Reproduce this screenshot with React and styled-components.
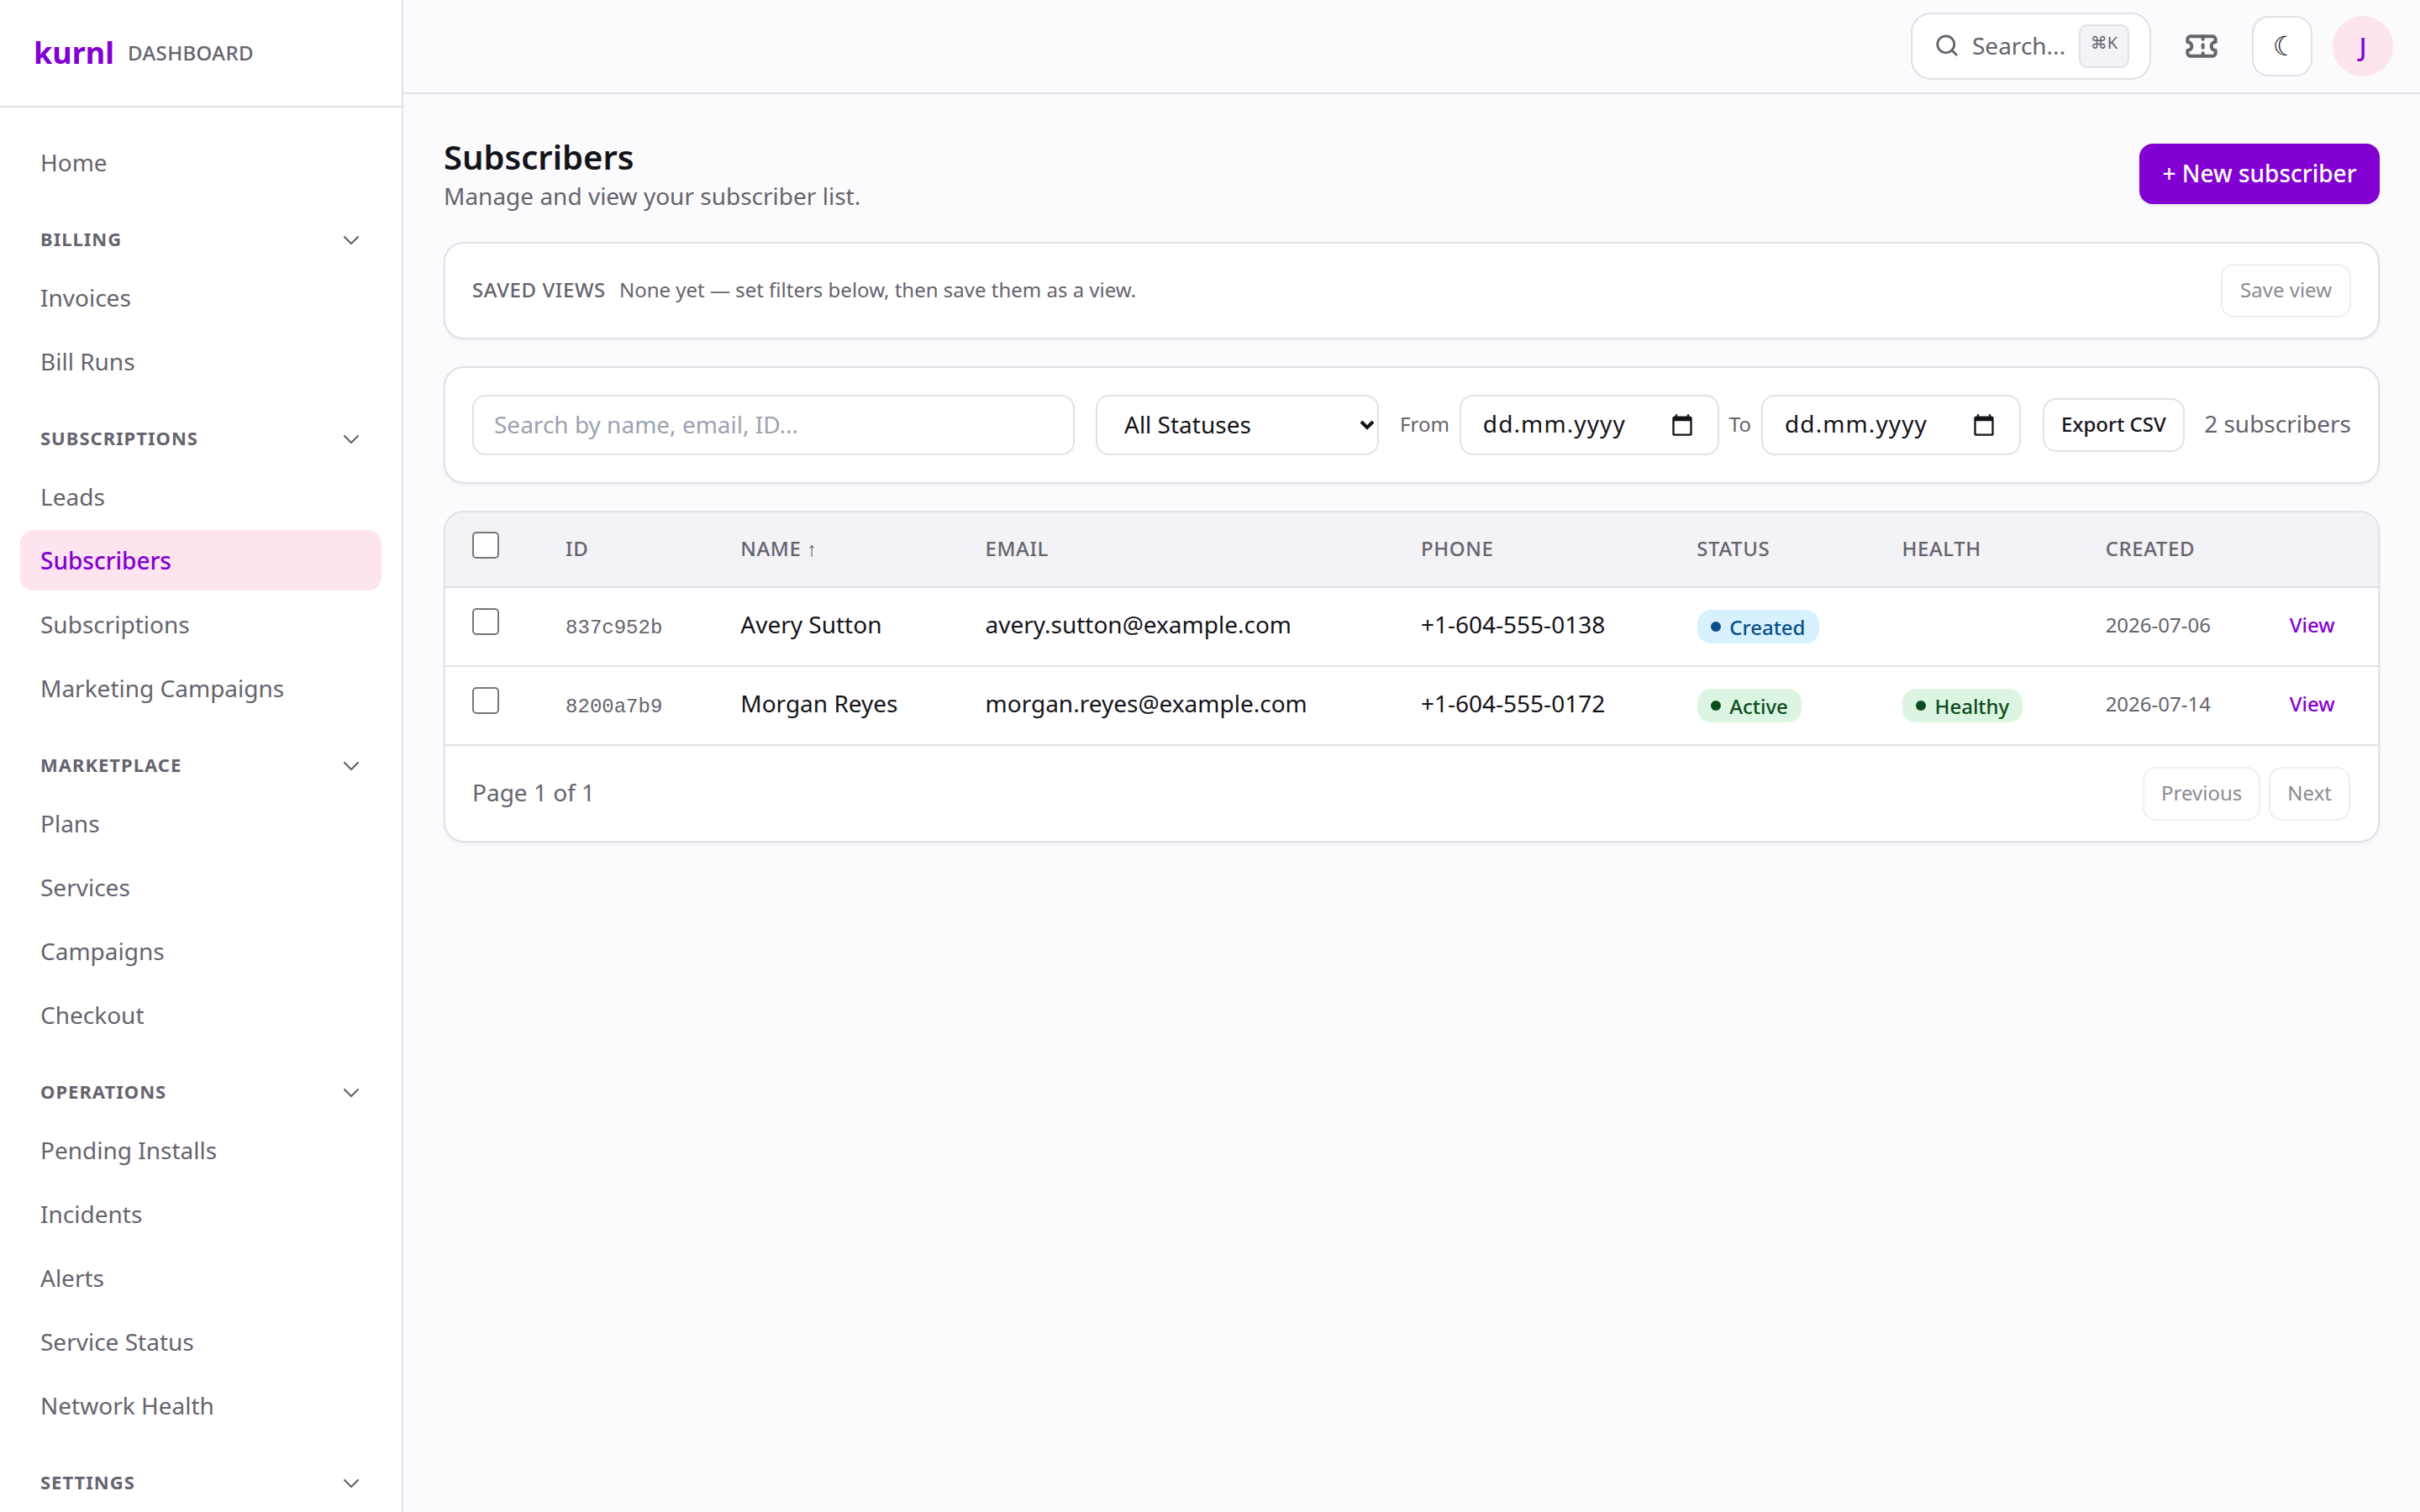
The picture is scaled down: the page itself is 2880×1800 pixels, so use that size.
import React from 'react';
import styled, { createGlobalStyle } from 'styled-components';
import { Search, Ticket, ChevronDown } from 'lucide-react';

const purple = '#8200d1';
const border = '#e2e0e8';
const muted = '#66636e';
const ink = '#15131a';

const Global = createGlobalStyle`
  * { box-sizing: border-box; }
  html, body { margin: 0; padding: 0; height: 100%; }
  body { font-family: "Noto Sans", sans-serif; background: #fbfafc; color: ${ink}; overflow: hidden; }
`;

const Shell = styled.div`display: flex; height: 1800px; overflow: hidden;`;
const Sidebar = styled.aside`width: 480px; flex: none; height: 100%; background: #fff; border-right: 2px solid ${border}; overflow: hidden;`;
const Brand = styled.div`height: 128px; border-bottom: 2px solid ${border}; display: flex; align-items: center; gap: 16px; padding: 0 0 2px 40px;`;
const Logo = styled.span`font-size: 36px; font-weight: 700; color: ${purple};`;
const BrandTag = styled.span`font-size: 24px; font-weight: 500; color: ${muted}; letter-spacing: 0.4px;`;
const Nav = styled.nav`padding: 29px 24px 0;`;
const NavItem = styled.a`
  display: flex; align-items: center; height: 72px; margin-bottom: 4px; padding: 0 24px; border-radius: 16px;
  font-size: 28px; color: ${p => (p.$active ? purple : muted)}; background: ${p => (p.$active ? '#fde4ee' : 'transparent')};
  font-weight: ${p => (p.$active ? 500 : 400)};
`;
const SectionHead = styled.div`
  display: flex; align-items: center; justify-content: space-between; height: 40px; margin: 35px 0 14px; padding: 0 20px 0 24px;
  font-size: 22px; font-weight: 700; letter-spacing: 1px; color: ${muted}; text-transform: uppercase;
  svg { margin-top: 3px; }
`;

const Column = styled.div`flex: 1; min-width: 0;`;
const Topbar = styled.header`height: 112px; border-bottom: 2px solid ${border}; display: flex; align-items: center; justify-content: flex-end; gap: 24px; padding: 0 32px 0 0;`;
const SearchBox = styled.div`width: 286px; height: 80px; background: #fff; border: 2px solid ${border}; border-radius: 24px; display: flex; align-items: center; gap: 15px; padding: 0 24px 2px 26px; color: ${muted}; font-size: 28px; margin-top: -1px;`;
const Kbd = styled.kbd`width: 60px; height: 52px; margin: 2px 0 0 auto; flex: none; border: 2px solid ${border}; border-radius: 10px; background: #f3f2f7; display: flex; justify-content: center; padding-top: 6px; font: 20px "Noto Sans", "DejaVu Sans", sans-serif; color: ${muted};`;
const IconButton = styled.button`width: 72px; height: 72px; border: ${p => (p.$framed ? `2px solid ${border}` : 'none')}; border-radius: 20px; background: ${p => (p.$framed ? '#fff' : 'transparent')}; padding: ${p => (p.$framed ? '0 0 0 6px' : '0')}; display: flex; align-items: center; justify-content: center; color: ${p => (p.$framed ? ink : muted)}; font: 32px "DejaVu Sans", sans-serif;`;
const Avatar = styled.div`width: 72px; height: 72px; border-radius: 50%; background: #fde4ee; color: ${purple}; display: flex; align-items: center; justify-content: center; font-size: 30px; font-weight: 500;`;

const Main = styled.main`padding: 48px 48px 0;`;
const PageHead = styled.div`display: flex; align-items: center; justify-content: space-between; margin-bottom: 34px;`;
const Title = styled.h1`margin: 0; font-size: 40px; line-height: 54px; font-weight: 600; color: ${ink};`;
const Subtitle = styled.p`margin: 0; font-size: 28px; line-height: 38px; padding-bottom: 2px; color: ${muted};`;
const Primary = styled.button`height: 72px; width: 286px; border: 0; border-radius: 16px; padding: 0 0 3px; background: ${purple}; color: #fff; font: 500 28px "Noto Sans", sans-serif; box-shadow: 0 2px 4px rgba(0,0,0,.06);`;

const Card = styled.section`background: #fff; border: 2px solid ${border}; border-radius: 24px; box-shadow: 0 2px 4px rgba(20,10,40,.05); margin-bottom: 32px;`;
const SavedRow = styled(Card)`height: 116px; display: flex; align-items: center; gap: 16px; padding: 0 32px;`;
const SavedLabel = styled.span`font-size: 24px; font-weight: 500; color: ${muted}; letter-spacing: 0.6px; padding-bottom: 3px;`;
const SavedNote = styled.span`font-size: 24px; color: ${muted}; padding-bottom: 3px;`;
const GhostButton = styled.button`
  height: 64px; padding: 0 21px 3px; background: #fff; border: 2px solid ${p => (p.$dim ? '#efeef3' : border)}; border-radius: 16px;
  font: ${p => p.$weight || 400} 24px "Noto Sans", sans-serif; color: ${p => (p.$dim ? '#8c8a92' : ink)};
`;
const SaveView = styled(GhostButton)`margin-left: auto;`;
const ExportButton = styled(GhostButton)`margin-left: 26px; padding: 0 20px 3px;`;
const PagerButton = styled(GhostButton)`padding: 0 20px 3px;`;

const Filters = styled(Card)`height: 140px; display: flex; align-items: center; padding: 0 32px;`;
const TextInput = styled.input`
  width: 717px; height: 72px; padding: 0 24px 3px; border: 2px solid ${border}; border-radius: 16px; background: #fff; font: 28px "Noto Sans", sans-serif; color: ${ink}; outline: 0;
  &::placeholder { color: #9ca3af; opacity: 1; }
`;
const Select = styled.select`
  appearance: none; width: 337px; height: 72px; margin-left: 25px; padding: 0 32px 3px; border: 2px solid ${border}; border-radius: 16px; font: 28px "Noto Sans", sans-serif; color: ${ink};
  background: #fff url("data:image/svg+xml;utf8,<svg xmlns='http://www.w3.org/2000/svg' width='20' height='14' viewBox='0 0 20 14'><path d='M3 3l7 7 7-7' fill='none' stroke='%2315131a' stroke-width='4'/></svg>") no-repeat right 2px center;
`;
const FieldLabel = styled.span`font-size: 24px; color: ${muted}; margin: 0 12px 0 ${p => p.$left}px; padding-bottom: 3px;`;
const DateField = styled.div`width: 309px; height: 72px; border: 2px solid ${border}; border-radius: 16px; display: flex; align-items: center; justify-content: space-between; padding: 0 28px 4px 26px; font-size: 28px; letter-spacing: 1.1px; color: ${ink}; svg { margin-top: 4px; }`;
const Count = styled.span`font-size: 28px; color: ${muted}; margin-left: auto; white-space: nowrap; padding-bottom: 5px;`;

const TableCard = styled(Card)`overflow: hidden; margin: 0;`;
const Table = styled.table`width: 100%; table-layout: fixed; border-collapse: collapse;`;
const HeadCell = styled.th`height: 89px; padding: 0 32px 4px; background: #f3f2f7; border-bottom: 2px solid ${border}; text-align: left; font-size: 24px; font-weight: 500; color: ${muted}; letter-spacing: 0.6px; white-space: nowrap;`;
const Cell = styled.td`height: 94px; padding: 0 32px 6px; border-bottom: 2px solid ${border}; font-size: 28px; color: ${ink}; white-space: nowrap;`;
const IdCell = styled(Cell)`font: 24px "Liberation Mono", monospace; color: ${muted}; padding: 2px 32px 0;`;
const DateCell = styled(Cell)`font-size: 24px; color: ${muted};`;
const ViewCell = styled(Cell)`font-size: 24px; font-weight: 500; color: ${purple}; padding: 0 0 5px 32px;`;
const Check = styled.input.attrs({ type: 'checkbox' })`appearance: none; display: block; width: 32px; height: 32px; margin: 0 0 ${p => p.$lift || 12}px; background: #fff; border: 2px solid #767676; border-radius: 5px;`;
const CheckCell = styled(Cell)`padding: 0 0 0 32px;`;
const CheckHead = styled(HeadCell)`padding: 0 0 0 32px;`;
const Badge = styled.span`display: inline-flex; align-items: center; gap: 10px; height: 40px; padding: 0 16px; border-radius: 16px; margin: 6px 0 0 1px; font-size: 24px; font-weight: 500; background: ${p => p.$bg}; color: ${p => p.$fg}; vertical-align: middle;`;
const Dot = styled.i`width: 12px; height: 12px; border-radius: 50%; background: ${p => p.$c};`;
const Pager = styled.div`height: 113px; display: flex; align-items: center; gap: 10px; padding: 0 33px 0 32px;`;
const PageText = styled.span`font-size: 28px; color: ${muted}; margin-right: auto; padding-bottom: 3px;`;

const CalendarIcon = () => (
  <svg width="28" height="28" viewBox="0 0 24 24" fill="#15131a" aria-hidden="true">
    <path d="M20 3h-1V1h-2v2H7V1H5v2H4c-1.1 0-2 .9-2 2v16c0 1.1.9 2 2 2h16c1.1 0 2-.9 2-2V5c0-1.1-.9-2-2-2zm0 18H4V8h16v13z" />
  </svg>
);

const nav = [
  { items: ['Home'] },
  { title: 'Billing', items: ['Invoices', 'Bill Runs'] },
  { title: 'Subscriptions', items: ['Leads', 'Subscribers', 'Subscriptions', 'Marketing Campaigns'] },
  { title: 'Marketplace', items: ['Plans', 'Services', 'Campaigns', 'Checkout'] },
  { title: 'Operations', items: ['Pending Installs', 'Incidents', 'Alerts', 'Service Status', 'Network Health'] },
  { title: 'Settings', items: [] },
];
const widths = [111, 208, 291, 518, 328, 244, 242, 219, 137];
const heads = ['ID', 'NAME ↑', 'EMAIL', 'PHONE', 'STATUS', 'HEALTH', 'CREATED'];
const blue = { $bg: '#d8f1ff', $fg: '#0a4f8a' };
const green = { $bg: '#dcf5e2', $fg: '#0c4d1e' };
const rows = [
  { id: '837c952b', name: 'Avery Sutton', email: 'avery.sutton@example.com', phone: '+1-604-555-0138', status: ['Created', blue], date: '2026-07-06' },
  { id: '8200a7b9', name: 'Morgan Reyes', email: 'morgan.reyes@example.com', phone: '+1-604-555-0172', status: ['Active', green], health: ['Healthy', green], date: '2026-07-14' },
];
const Pill = ({ v }) => (
  <Badge {...v[1]}><Dot $c={v[1].$fg} />{v[0]}</Badge>
);

export default function App() {
  return (
    <Shell>
      <Global />
      <Sidebar>
        <Brand><Logo>kurnl</Logo><BrandTag>DASHBOARD</BrandTag></Brand>
        <Nav>
          {nav.map((s, i) => (
            <div key={i}>
              {s.title && <SectionHead>{s.title}<ChevronDown size={32} strokeWidth={1.6} /></SectionHead>}
              {s.items.map(n => <NavItem key={n} $active={n === 'Subscribers'}>{n}</NavItem>)}
            </div>
          ))}
        </Nav>
      </Sidebar>
      <Column>
        <Topbar>
          <SearchBox><Search size={30} strokeWidth={2.2} />Search...<Kbd>⌘K</Kbd></SearchBox>
          <IconButton aria-label="Tickets"><Ticket size={40} strokeWidth={2.4} /></IconButton>
          <IconButton $framed aria-label="Theme">☾</IconButton>
          <Avatar>J</Avatar>
        </Topbar>
        <Main>
          <PageHead>
            <div><Title>Subscribers</Title><Subtitle>Manage and view your subscriber list.</Subtitle></div>
            <Primary>+ New subscriber</Primary>
          </PageHead>
          <SavedRow>
            <SavedLabel>SAVED VIEWS</SavedLabel>
            <SavedNote>None yet — set filters below, then save them as a view.</SavedNote>
            <SaveView $dim>Save view</SaveView>
          </SavedRow>
          <Filters>
            <TextInput placeholder="Search by name, email, ID..." />
            <Select defaultValue="all"><option value="all">All Statuses</option></Select>
            <FieldLabel $left={25}>From</FieldLabel>
            <DateField>dd.mm.yyyy<CalendarIcon /></DateField>
            <FieldLabel $left={12}>To</FieldLabel>
            <DateField>dd.mm.yyyy<CalendarIcon /></DateField>
            <ExportButton $weight={500}>Export CSV</ExportButton>
            <Count>2 subscribers</Count>
          </Filters>
          <TableCard>
            <Table>
              <colgroup>{widths.map((w, i) => <col key={i} width={w} />)}</colgroup>
              <thead>
                <tr>
                  <CheckHead><Check $lift={10} /></CheckHead>
                  {heads.map(h => <HeadCell key={h}>{h}</HeadCell>)}
                  <HeadCell />
                </tr>
              </thead>
              <tbody>
                {rows.map(r => (
                  <tr key={r.id}>
                    <CheckCell><Check /></CheckCell>
                    <IdCell>{r.id}</IdCell>
                    <Cell>{r.name}</Cell>
                    <Cell>{r.email}</Cell>
                    <Cell>{r.phone}</Cell>
                    <Cell><Pill v={r.status} /></Cell>
                    <Cell>{r.health && <Pill v={r.health} />}</Cell>
                    <DateCell>{r.date}</DateCell>
                    <ViewCell>View</ViewCell>
                  </tr>
                ))}
              </tbody>
            </Table>
            <Pager>
              <PageText>Page 1 of 1</PageText>
              <PagerButton $dim>Previous</PagerButton>
              <PagerButton $dim>Next</PagerButton>
            </Pager>
          </TableCard>
        </Main>
      </Column>
    </Shell>
  );
}
